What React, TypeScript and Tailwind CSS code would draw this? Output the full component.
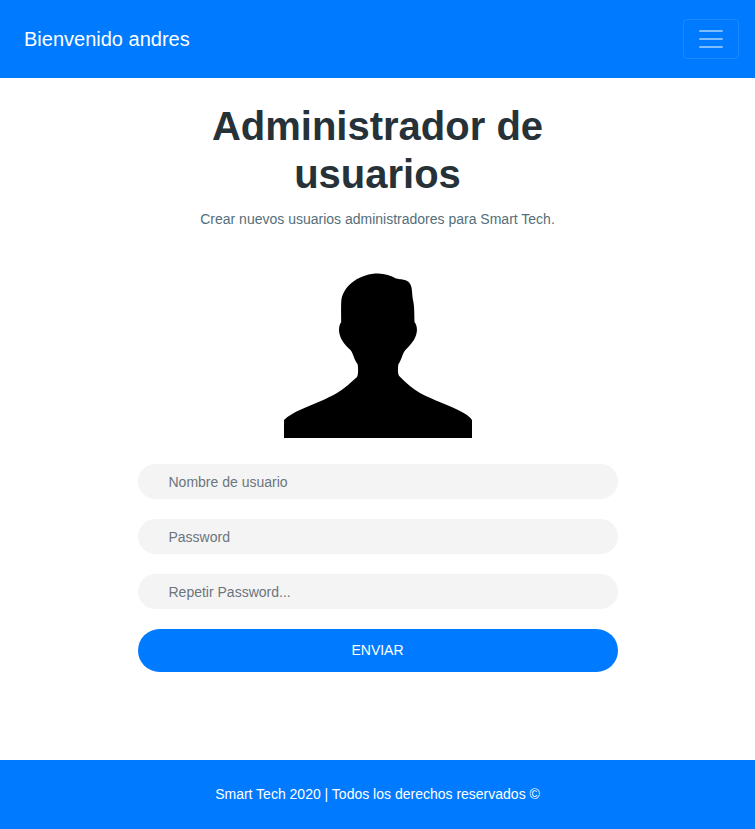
import React from "react";

const fields = [
  { name: "username", type: "text", placeholder: "Nombre de usuario" },
  { name: "password", type: "password", placeholder: "Password" },
  { name: "repeat", type: "password", placeholder: "Repetir Password..." },
];

function Header() {
  return (
    <header className="flex h-[78px] items-center justify-between bg-[#007bff] pr-4 pl-6">
      <a className="text-[20px] leading-[30px] text-white" href="#">
        Bienvenido andres
      </a>
      <button
        type="button"
        aria-label="Menu"
        className="flex h-10 w-14 items-center justify-center rounded border border-white/10"
      >
        <svg width="30" height="30" viewBox="0 0 30 30" fill="none">
          <path
            d="M4 7h22M4 15h22M4 23h22"
            stroke="rgba(255,255,255,0.5)"
            strokeWidth="2"
            strokeLinecap="round"
            strokeMiterlimit="10"
          />
        </svg>
      </button>
    </header>
  );
}

function Avatar() {
  return (
    <svg className="mx-auto block" width="188" height="165" viewBox="284 273 188 165">
      <path d="M284 438V420C288 416 294 412.500 301 409.500C313 404 327 399 337 393C345 388 351 382.500 357 377C358.500 375 358.300 367 357.500 364C354 359.500 353.500 354 350.500 350C345.500 345.500 339 338.500 339 330C339 326.500 340 323.500 341.200 322C341.200 314 340.800 305 341.500 299C344.500 284 361 273.400 378 273.400C385 273.400 391 275.500 396 278.600C401 279.800 406 279 409.500 283C412.700 287 411.800 294 413 300C414.500 306 414.300 315 414.500 322C416.500 324.500 417.200 328 416.900 331C416 340 410 345 405 350.500C402 354.500 402 359 398.500 364C397.800 367 397.600 374 399.200 376C406 383 412.500 388.500 420 393C432 399.500 450 405.500 461 411.500C466 414 470 417 472 420V438Z" />
    </svg>
  );
}

export default function App() {
  return (
    <div className="flex h-[829px] flex-col bg-white font-['Liberation_Sans',Arial,sans-serif]">
      <Header />
      <main className="mx-auto w-[480px] pt-6 text-center">
        <h1 className="mx-auto w-[360px] text-[40px] leading-[48px] font-bold text-[#263238]">
          Administrador de usuarios
        </h1>
        <p className="mt-[11px] mb-[43px] text-[14px] leading-[21px] text-[#546e7a]">
          Crear nuevos usuarios administradores para Smart Tech.
        </p>
        <Avatar />
        <form className="mt-[26px] flex flex-col gap-5">
          {fields.map((field) => (
            <input
              key={field.name}
              type={field.type}
              placeholder={field.placeholder}
              className="h-[35px] w-full rounded-[20px] bg-[#f4f4f4] px-[31px] text-[14px] placeholder:text-[#6c757d]"
            />
          ))}
          <button
            type="button"
            className="h-[43px] rounded-[21.5px] bg-[#007bff] text-[14px] leading-[21px] text-white"
          >
            ENVIAR
          </button>
        </form>
      </main>
      <footer className="mt-auto flex h-[69px] items-center justify-center bg-[#007bff] text-[14px] leading-[21px] text-white">
        Smart Tech 2020 | Todos los derechos reservados ©
      </footer>
    </div>
  );
}
